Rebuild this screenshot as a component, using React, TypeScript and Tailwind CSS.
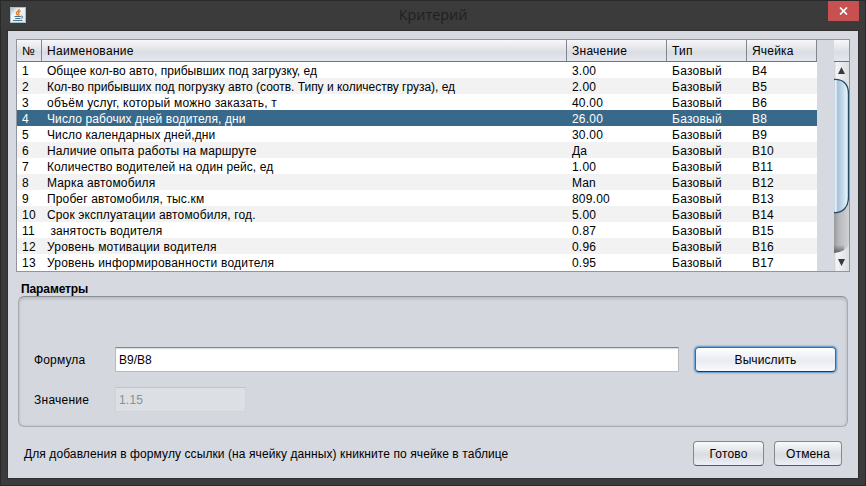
import React from "react";

type Row = { name: string; value: string; cell: string; track: string };

const rows: Row[] = [
  { name: "Общее кол-во авто, прибывших под загрузку, ед", value: "3.00", cell: "B4", track: "tracking-[0.03px]" },
  { name: "Кол-во прибывших под погрузку авто (соотв. Типу и количеству груза), ед", value: "2.00", cell: "B5", track: "tracking-[-0.02px]" },
  { name: "объём услуг, который можно заказать, т", value: "40.00", cell: "B6", track: "tracking-[0.21px]" },
  { name: "Число рабочих дней водителя, дни", value: "26.00", cell: "B8", track: "tracking-[0.09px]" },
  { name: "Число календарных дней,дни", value: "30.00", cell: "B9", track: "tracking-[0.09px]" },
  { name: "Наличие опыта работы на маршруте", value: "Да", cell: "B10", track: "tracking-[0.12px]" },
  { name: "Количество водителей на один рейс, ед", value: "1.00", cell: "B11", track: "tracking-[0.11px]" },
  { name: "Марка автомобиля", value: "Man", cell: "B12", track: "tracking-[0.16px]" },
  { name: "Пробег автомобиля, тыс.км", value: "809.00", cell: "B13", track: "tracking-[0.15px]" },
  { name: "Срок эксплуатации автомобиля, год.", value: "5.00", cell: "B14", track: "tracking-[0.14px]" },
  { name: "\u00a0занятость водителя", value: "0.87", cell: "B15", track: "tracking-[0.11px]" },
  { name: "Уровень мотивации водителя", value: "0.96", cell: "B16", track: "tracking-[0.2px]" },
  { name: "Уровень информированности водителя", value: "0.95", cell: "B17", track: "tracking-[0.2px]" },
];

function JavaIcon() {
  return (
    <svg width="16" height="16" viewBox="0 0 16 16" className="block">
      <defs>
        <linearGradient id="jbg" x1="0" y1="0" x2="1" y2="1">
          <stop offset="0" stopColor="#8fb1c0" />
          <stop offset=".35" stopColor="#f4f7f8" />
          <stop offset="1" stopColor="#dfe6ea" />
        </linearGradient>
      </defs>
      <rect width="16" height="16" rx="1" fill="url(#jbg)" />
      <rect x=".5" y=".5" width="15" height="15" fill="none" stroke="#a9bfca" />
      <path d="M9.3 1.8C9.8 3.8 5.9 4.5 6.3 6.2 6.5 7 7.3 7.5 7.5 8.5M10.5 4.2C8 5.2 8 6.1 8.9 6.9 9.3 7.4 8.9 8 8.3 8.6" fill="none" stroke="#e8791c" strokeWidth="1.4" />
      <path d="M4.5 9.5H10.8M5.2 11.5H10.2M10.8 9.2C13.6 8.7 13 11.2 10.8 11.4M3 13.5H12.4" fill="none" stroke="#4a7391" strokeWidth="1" />
    </svg>
  );
}

function Button({ text, className }: { text: string; className: string }) {
  return (
    <button className={`flex h-[25px] items-center justify-center rounded-[4px] border ${className}`}>{text}</button>
  );
}

const head = "flex h-full items-center border-r border-[#83868f] pl-[5px]";
const headFill = "border-b border-[#70737c] bg-linear-to-b from-[#f8f8fa] via-[#dadde4] via-60% to-[#e5e8ee]";
const plainButton =
  "border-[#85888d] border-b-[#55585d] bg-linear-to-b from-[#fafafb] via-[#d9dce1] via-55% to-[#eceff5] tracking-[0.15px]";

export default function App() {
  return (
    <div className="flex h-[486px] w-[866px] flex-col overflow-hidden border border-[#292929] bg-[#3b3b3b] px-[6px] pb-[6px] text-[12px] leading-[16px] whitespace-nowrap text-black [font-family:'Liberation_Sans',Arial,sans-serif]">
      <header className="relative flex h-[29px] shrink-0 items-start">
        <div className="mt-[6px] ml-[3px]">
          <JavaIcon />
        </div>
        <div className="absolute inset-x-0 top-[4px] flex justify-center text-[14.4px] leading-[20px] text-[#202020]">
          <span className="[font-family:'Open_Sans',sans-serif]">Критерий</span>
        </div>
        <button className="absolute top-0 right-0 flex h-[20px] w-[31px] items-center justify-center bg-[#c75050]">
          <svg width="9" height="8" viewBox="0 0 9 8">
            <path d="M1 .5 8 7.5M8 .5 1 7.5" stroke="#fff" strokeWidth="1.7" />
          </svg>
        </button>
      </header>

      <main className="flex min-h-0 flex-1 flex-col border border-[#303030] bg-[#d6d9e0] pt-[8px] pl-[8px]">
        <section className="flex h-[233px] w-[834px] shrink-0 border border-[#92959e]">
          <div className="w-[800px] bg-white">
            <div className={`flex h-[22px] ${headFill}`}>
              <div className={`${head} w-[25px]`}>№</div>
              <div className={`${head} w-[525px] tracking-[0.3px]`}>Наименование</div>
              <div className={`${head} w-[100px] tracking-[0.25px]`}>Значение</div>
              <div className={`${head} w-[80px] tracking-[0.2px]`}>Тип</div>
              <div className={`${head} w-[70px] tracking-[0.2px]`}>Ячейка</div>
            </div>
            {rows.map((r, i) => (
              <div
                key={r.cell}
                className={`flex h-[16px] pl-[5px] leading-[18px] ${
                  i === 3 ? "bg-[#39698a] text-white" : i % 2 ? "bg-[#f2f2f2]" : "bg-white"
                }`}
              >
                <div className="w-[25px] tracking-[0.3px]">{i + 1}</div>
                <div className={`w-[525px] ${r.track}`}>{r.name}</div>
                <div className="w-[100px] tracking-[0.2px]">{r.value}</div>
                <div className="w-[80px] tracking-[0.25px]">Базовый</div>
                <div className="tracking-[0.2px]">{r.cell}</div>
              </div>
            ))}
          </div>
          <div className="ml-[17px] flex w-[15px] flex-col">
            <div className={`h-[22px] ${headFill}`} />
            <svg width="15" height="209" viewBox="0 0 15 209" className="block">
              <defs>
                <linearGradient id="cap"><stop stopColor="#c8cbd0" /><stop offset=".15" stopColor="#f3f4f5" /><stop offset="1" stopColor="#dcdee1" /></linearGradient>
                <linearGradient id="track"><stop stopColor="#989a9e" /><stop offset=".35" stopColor="#b7b9bd" /><stop offset="1" stopColor="#cfd1d4" /></linearGradient>
                <linearGradient id="shade" x1="0" y1="0" x2="0" y2="1"><stop stopColor="#444" stopOpacity="0" /><stop offset="1" stopColor="#444" stopOpacity=".75" /></linearGradient>
                <linearGradient id="thumb">
                  <stop stopColor="#b5cbdc" /><stop offset=".12" stopColor="#f1f7fb" /><stop offset=".25" stopColor="#a9c2d7" />
                  <stop offset=".6" stopColor="#c4dbe9" /><stop offset=".9" stopColor="#e2f5fc" /><stop offset="1" stopColor="#b2d0df" />
                </linearGradient>
              </defs>
              <rect width="15" height="209" fill="url(#track)" />
              <rect y="183" width="10" height="8" fill="url(#shade)" />
              <path d="M0 0H15V28Q12 17 0 17Z" fill="url(#cap)" />
              <path d="M0 209H15V182Q12 190 0 191Z" fill="url(#cap)" />
              <path d="M0 17.5C9 17 14.5 22 14.5 32V135C14.5 145 9 151 0 150.5Z" fill="url(#thumb)" />
              <path d="M0 17.5C9 17 14.5 22 14.5 32V135C14.5 145 9 151 0 150.5" fill="none" stroke="#264963" strokeWidth="1.3" />
              <path d="M7.5 5 11 12H4ZM7.5 204 11 197H4Z" fill="#37393c" />
            </svg>
          </div>
        </section>

        <h2 className="mt-[9px] ml-[5px] h-[15px] font-bold tracking-[-0.1px]">Параметры</h2>

        <section className="ml-[2px] h-[131px] w-[830px] shrink-0 rounded-[6px] border border-[#a6a9af] border-t-[#8d9096] bg-[#d4d7de] pt-[50px] pl-[15px] shadow-[inset_0_2px_3px_#b8bbc2,inset_0_0_3px_#bfc2c8]">
          <div className="flex h-[25px] items-center">
            <div className="w-[81px] tracking-[0.15px]">Формула</div>
            <div className="flex h-[25px] w-[564px] items-center border border-[#b9bbc0] border-t-[#85878b] bg-white pl-[3px] shadow-[inset_0_1px_1px_#d6d7d9]">
              B9/B8
            </div>
            <Button text="Вычислить" className="ml-[16px] w-[141px] border-[#446a8e] border-b-[#22374c] bg-linear-to-b from-white via-[#e8ebf2] via-55% to-[#f8faff] tracking-[0.1px] shadow-[0_0_0_1px_#73a4d1,0_0_1px_2px_#a8c2dd]" />
          </div>
          <div className="mt-[15px] flex h-[25px] items-center">
            <div className="w-[81px] tracking-[0.25px]">Значение</div>
            <div className="flex h-[25px] w-[131px] items-center border border-[#d0d3d8] border-t-[#c1c4c8] bg-[#dcdfe3] pl-[3px] tracking-[0.2px] text-[#8e8f91]">
              1.15
            </div>
          </div>
        </section>

        <footer className="mt-[14px] flex h-[25px] items-center pl-[7px]">
          <div className="w-[670px] pl-px tracking-[0.09px]">Для добавления в формулу ссылки (на ячейку данных) кникните по ячейке в таблице</div>
          <Button text="Готово" className={`w-[71px] ${plainButton}`} />
          <Button text="Отмена" className={`ml-[10px] w-[68px] ${plainButton}`} />
        </footer>
      </main>
    </div>
  );
}
